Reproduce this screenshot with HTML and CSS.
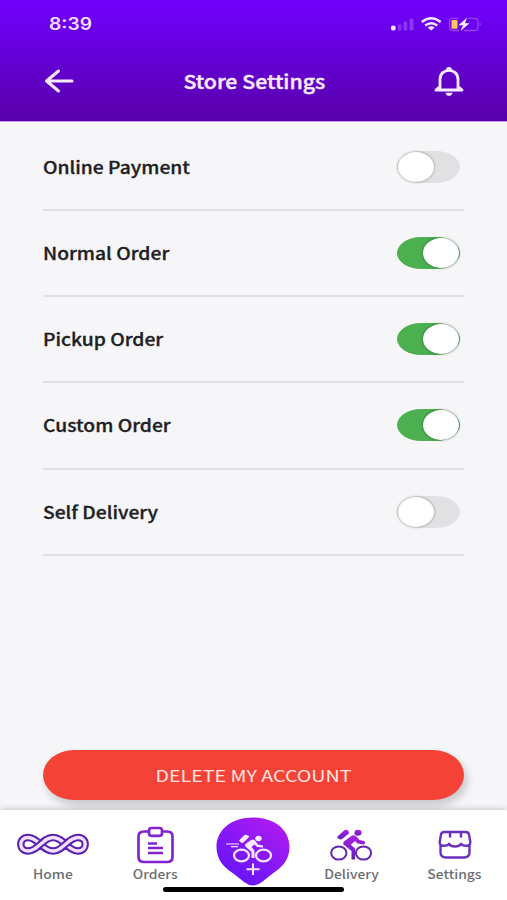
FILE: index.html
```html
<!DOCTYPE html>
<html lang="en">
<head>
<meta charset="utf-8">
<title>Store Settings</title>
<link rel="stylesheet" href="styles.css">
</head>
<body>
<div class="app">
  <header class="header">
    <div class="status">
      <span class="time">8:39</span>
      <svg class="status-icons" width="92" height="18" viewBox="0 0 92 18">
        <rect x="1" y="10.500" width="4.600" height="5" rx="1.800" fill="#f7e6ff"/>
        <g fill="#8d35f5"><rect x="8" y="9.500" width="3.500" height="6" rx="1"/><rect x="13.500" y="6.500" width="3.800" height="9" rx="1"/><rect x="19.500" y="3.500" width="4" height="12" rx="1"/></g>
        <g fill="none" stroke="#f7e6ff" stroke-width="2.400"><path d="M31.800 7Q41.200 -.4 50.600 7"/><path d="M35.200 10.500Q41.200 5.900 47.200 10.500"/></g>
        <path d="M37.700 12.600Q41.200 10.100 44.700 12.600L41.200 15.400Z" fill="#f7e6ff"/>
        <path d="M68 3.300H62.500Q59.500 3.300 59.500 6.300V12.500Q59.500 15.500 62.500 15.500H69M78 3.300H84Q88 3.300 88 7V12Q88 15.500 84.500 15.500H74" fill="none" stroke="#9a43ef" stroke-width="1.300"/>
        <path d="M89.600 7Q92.500 9.300 89.600 11.500Z" fill="#9139ee"/>
        <rect x="61.500" y="5" width="6" height="8.800" rx="1.200" fill="#ffc857"/>
        <path d="M77 2.500 68.500 10.300H73L70.500 16 79.500 8.200H75Z" fill="#fff0ff"/>
      </svg>
    </div>
    <div class="titlebar">
      <svg class="back" width="32" height="26" viewBox="0 0 32 26"><path d="M29 13H4M15.500 3 3.500 13 15.500 23" fill="none" stroke="#fbeaff" stroke-width="3" stroke-linecap="round" stroke-linejoin="round"/></svg>
      <h1 class="title"><span>Store Settings</span></h1>
      <svg class="bell" width="32" height="32" viewBox="0 0 32 32">
        <path d="M3 25H29M7 24.500V14.500C7 2.300 25 2.300 25 14.500V24.500M3 25 7 21.500M29 25 25 21.500" fill="none" stroke="#fbeaff" stroke-width="2.800" stroke-linejoin="round" stroke-linecap="round"/>
        <path d="M13.200 5.500Q12.500 2 16 2T18.800 5.500ZM12.500 27.700H19.500Q19 30.800 16 30.800T12.500 27.700Z" fill="#fbeaff"/>
      </svg>
    </div>
  </header>
  <main class="content">
    <ul class="list">
      <li class="row"><span class="label">Online Payment</span><span class="toggle"><i class="knob"></i></span></li>
      <li class="row"><span class="label">Normal Order</span><span class="toggle on"><i class="knob"></i></span></li>
      <li class="row"><span class="label">Pickup Order</span><span class="toggle on"><i class="knob"></i></span></li>
      <li class="row"><span class="label">Custom Order</span><span class="toggle on"><i class="knob"></i></span></li>
      <li class="row"><span class="label">Self Delivery</span><span class="toggle"><i class="knob"></i></span></li>
    </ul>
    <button class="delete"><span>DELETE MY ACCOUNT</span></button>
  </main>
  <nav class="nav">
    <a class="tab">
      <svg width="74" height="40" viewBox="0 0 74 40">
        <defs>
          <path id="braid" d="M37 13.500C26 13.500 22.500 27 12 27C7.500 27 4.800 24 4.800 20.250S7.500 13.500 12 13.500C22.500 13.500 26 27 37 27C48 27 51.500 13.500 62 13.500C66.500 13.500 69.200 16.500 69.200 20.250S66.500 27 62 27C51.500 27 48 13.500 37 13.500Z"/>
        </defs>
        <g fill="none">
          <use href="#braid" stroke="#5a20b0" stroke-width="7.400"/>
          <use href="#braid" stroke="#f2e0ff" stroke-width="3.400"/>
          <path d="M20.500 23.700 28.500 16.800M45.500 23.700 53.500 16.800" stroke="#5a20b0" stroke-width="7.400"/>
          <path d="M19 24.800 30 15.700M44 24.800 55 15.700" stroke="#f2e0ff" stroke-width="3.400"/>
        </g>
      </svg>
      <span>Home</span>
    </a>
    <a class="tab">
      <svg width="40" height="40" viewBox="1 0 40 40" fill="none" stroke="#8223cf" stroke-width="2.700">
        <path d="M14 7.500H9Q3.500 7.500 3.500 12.500V33Q3.500 38 9 38H32Q37.500 38 37.500 33V12.500Q37.500 7.500 32 7.500H27"/>
        <rect x="14" y="4" width="13" height="7.800" rx="2.500"/>
        <path d="M13 19.500H22M13 24H28M13 29H28" stroke-width="2.400"/>
      </svg>
      <span>Orders</span>
    </a>
    <a class="tab add" aria-label="New delivery">
      <svg width="76" height="70" viewBox="0 0 76 70">
        <defs>
          <linearGradient id="drop" x1=".8" y1="0" x2=".15" y2=".85"><stop offset="0" stop-color="#b01bef"/><stop offset="1" stop-color="#6515fb"/></linearGradient>
          <linearGradient id="rider" x1=".6" y1="0" x2=".4" y2="1"><stop offset="0" stop-color="#ad20df"/><stop offset=".5" stop-color="#8a1ed6"/><stop offset="1" stop-color="#5d24aa"/></linearGradient>
        </defs>
        <path d="M38 .5C60 .5 74.500 13 74.500 30C74.500 42 68 50 57 57L47 65Q38 72 29 65L19 57C8 50 1.500 42 1.500 30C1.500 13 16 .5 38 .5Z" fill="url(#drop)"/>
        <g stroke="#ffe9ff" fill="none" stroke-width="2.200">
          <ellipse cx="26.500" cy="38.500" rx="7.500" ry="5.800"/><ellipse cx="48.500" cy="38.500" rx="7.500" ry="5.800"/>
          <path d="M11 27H24M16 29.600H23" stroke-width="1.200"/>
          <path d="M38 46.500V58M31.500 52.300H44.500" stroke-width="2"/>
        </g>
        <path d="M24 23.500 29 18.500Q30 17.300 32 18L34.500 19.500 29 25Q27.500 26.500 26 25.500Z" fill="#ffe9ff"/>
        <path d="M30.500 27 36 23Q38.500 21.500 40.500 24L43 27.500 48 28.500V30.500L42 30 39.500 27.500 36.500 30 39.500 33.500V41H36.500V35L31.500 30.500Q29 28.500 30.500 27Z" fill="#ffe9ff"/>
        <ellipse cx="43.500" cy="21.500" rx="3.200" ry="2.800" fill="#ffe9ff"/>
      </svg>
    </a>
    <a class="tab">
      <svg width="44" height="40" viewBox="1 0 44 40">
        <g fill="none" stroke="#6426b3" stroke-width="2"><ellipse cx="9.800" cy="29" rx="7.600" ry="6.600"/><ellipse cx="34.500" cy="29" rx="7.600" ry="6.600"/></g>
        <g fill="url(#rider)">
          <path d="M8 13 15 6.500Q17 5 19.500 7L20 9.500 13 15Q10 16.500 8 13Z"/>
          <path d="M15 17.500 22.500 11.800Q25.500 10 28 13L30.500 16 35.500 17.300Q37 20 34.500 20.500L28.500 19.500 26 17 21.800 20.800 26 24.500V35.500H22.500V27L15.500 21.300Q13 19.500 15 17.500Z"/>
          <ellipse cx="29" cy="8.800" rx="3.600" ry="3"/>
        </g>
      </svg>
      <span>Delivery</span>
    </a>
    <a class="tab">
      <svg width="40" height="40" viewBox="0 0 40 40" fill="none" stroke="#6930bd" stroke-width="2.400" stroke-linejoin="round">
        <path d="M9.500 8H30.500Q33.500 8 34 10.500L35.300 18Q35.500 21.800 31 21.800Q27 21.800 26 19.800Q24.500 22.500 20 22.500Q15.500 22.500 14 19.800Q13 21.800 9 21.800Q4.500 21.800 4.700 18L6 10.500Q6.500 8 9.500 8ZM5.500 21V28Q5.500 33.500 11 33.500H29Q34.500 33.500 34.500 28V21M15 8V13.500M26 8V13.500"/>
      </svg>
      <span>Settings</span>
    </a>
    <div class="home-indicator"></div>
  </nav>
</div>
</body>
</html>
```
FILE: styles.css
```css
* { box-sizing: border-box; }
body { margin: 0; font-family: "Noto Sans CJK SC", "Noto Sans", sans-serif; }
.app { height: 900px; display: flex; flex-direction: column; background: #f6f6f9; overflow: hidden; }
.header { height: 122px; background: linear-gradient(#7200fc 0, #6900ea 30px, #6100c9 75px, #5900ab 119px); border-bottom: 1px solid #c796e8; }
.status { height: 46px; padding: 1px 25px 0 49px; display: flex; justify-content: space-between; align-items: center; }
.time { font: 600 17px/20px Inter, sans-serif; color: #f5dfff; transform: scaleX(1.13); transform-origin: left; }
.titlebar { display: flex; justify-content: space-between; align-items: center; height: 70px; padding: 0 42px 0 43px; }
.title { margin: 0; font-size: 19px; line-height: 30px; font-weight: 500; color: #fbeaff; -webkit-text-stroke: .4px #fbeaff; }
.title span { display: block; transform: scaleX(1.12); }
.content { flex: 1; padding: 2.5px 43px 10px; display: flex; flex-direction: column; }
.list { margin: 0; padding: 0; list-style: none; }
.row { height: 86.25px; display: flex; justify-content: space-between; align-items: center; border-bottom: 2px solid #e1e1e4; padding-right: 4px; }
.label { font-size: 17px; line-height: 26px; font-weight: 500; color: #202023; -webkit-text-stroke: .3px #202023; transform: scaleX(1.133); transform-origin: left; }
.toggle { display: flex; width: 63px; height: 32px; padding: 1px; border-radius: 24px / 16px; background: #e1e1e3; }
.knob { width: 36px; height: 30px; border-radius: 50%; background: #fff; box-shadow: 0 0 2px 1px rgba(0,0,0,.2); }
.toggle.on { background: #4caf50; justify-content: flex-end; }
.delete { margin-top: auto; height: 50px; padding: 0; border: 0; border-radius: 31px / 25px; background: #f44336; box-shadow: 3px 5px 8px rgba(0,0,0,.2); color: #ffe3e0; font: 400 16.5px/26px "Noto Sans CJK SC", sans-serif; }
.delete span { display: block; transform: scaleX(1.19); }
.nav { position: relative; height: 90px; padding: 14px 13px 0 15px; background: #fff; box-shadow: 0 -1px 6px rgba(0,0,0,.2); display: grid; grid-template-columns: 76px 129px 66px 131px 75px; }
.tab { display: flex; flex-direction: column; align-items: center; font-size: 12.5px; line-height: 20px; font-weight: 500; color: #6e6e71; }
.tab svg { flex: none; }
.tab span { transform: scaleX(1.11); }
.add { margin-top: -7px; }
.home-indicator { position: absolute; left: 163px; top: 77px; width: 181px; height: 5px; border-radius: 3px; background: #000; }
```
